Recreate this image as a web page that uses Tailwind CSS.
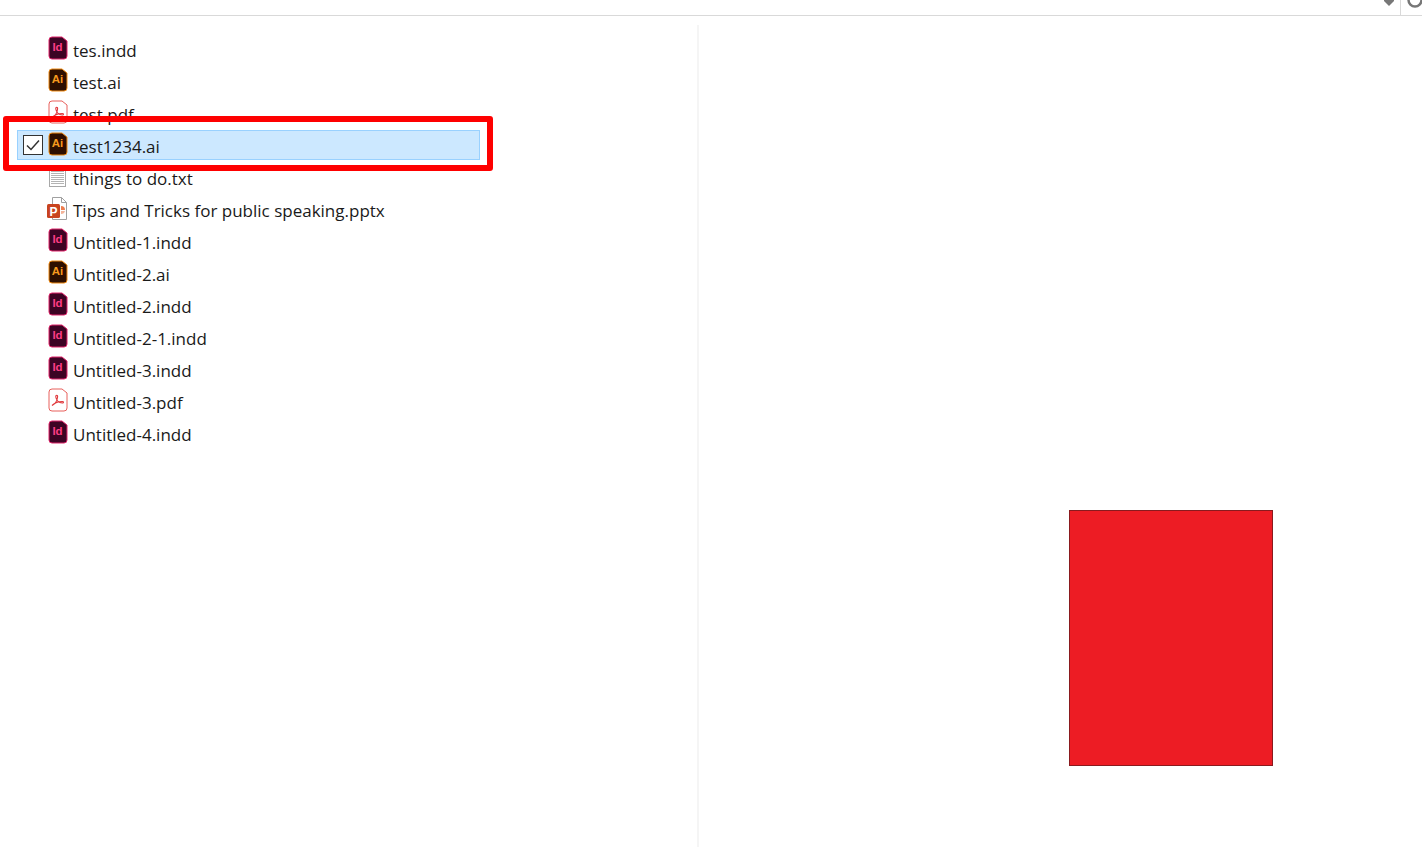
<!DOCTYPE html>
<html lang="en">
<head>
    <meta charset="UTF-8">
    <meta name="viewport" content="width=device-width, initial-scale=1.0">
    <title>Folder</title>
    <script src="https://cdn.jsdelivr.net/npm/@tailwindcss/browser@4"></script>
</head>
<body class="bg-white h-[847px] overflow-hidden relative font-['Open_Sans','Noto_Sans',sans-serif] text-[#1a1a1a]">
    <!-- shared file icons -->
    <svg class="hidden">
        <symbol id="icon-id" viewBox="0 0 20 24">
            <path d="M4 1h10l5 4v15a3 3 0 0 1-3 3H4a3 3 0 0 1-3-3V4a3 3 0 0 1 3-3z" fill="#3d0424" stroke="#e0246a" stroke-width="1"/>
            <text x="9.500" y="15" text-anchor="middle" font-family="Liberation Sans" font-weight="700" font-size="11.500" fill="#ff3d86">Id</text>
        </symbol>
        <symbol id="icon-ai" viewBox="0 0 20 24">
            <path d="M4 1h10l5 4v15a3 3 0 0 1-3 3H4a3 3 0 0 1-3-3V4a3 3 0 0 1 3-3z" fill="#2e0f00" stroke="#f08a12" stroke-width="1"/>
            <text x="9.500" y="15" text-anchor="middle" font-family="Liberation Sans" font-weight="700" font-size="11.500" fill="#f79a1e">Ai</text>
        </symbol>
        <symbol id="icon-pdf" viewBox="0 0 20 24">
            <path d="M4 1h10l5 4v15a3 3 0 0 1-3 3H4a3 3 0 0 1-3-3V4a3 3 0 0 1 3-3z" fill="#fff" stroke="#e8605c" stroke-width="1"/>
            <path d="M4 17.500c3-1.500 5.200-5 5.600-8.500.2-2.400-2-2.400-1.800 0 .3 3 3 5.600 6.500 6 1.600.1 1.600-1.500 0-1.500-3.200 0-7.200 1-10.300 4z" fill="none" stroke="#e0383c" stroke-width="1.100"/>
        </symbol>
    </svg>

    <!-- top bar -->
    <div class="h-4 border-b border-[#d9d9d9] flex justify-end overflow-hidden">
        <svg class="w-3 h-2 mr-[5px]" viewBox="0 0 12 8"><path d="M1 0h10v1L6 6 1 1z" fill="#777"/></svg>
        <div class="w-[22px] h-[15px] border-l border-[#d9d9d9] overflow-hidden">
            <svg class="ml-[6px] w-6 h-[15px]" viewBox="0 0 24 15"><circle cx="8" cy="0" r="6.500" fill="none" stroke="#777" stroke-width="2.500"/></svg>
        </div>
    </div>

    <div class="flex h-[831px]">
        <!-- file list -->
        <div class="w-[697px] pt-[18px] pl-[17px] text-[17px] leading-8">
            <div class="w-[463px]">
                <div class="flex items-center h-8 pl-[31px]"><svg class="w-5 h-6 mr-[5px] -mt-1"><use href="#icon-id"/></svg><span class="pt-[2px]">tes.indd</span></div>
                <div class="flex items-center h-8 pl-[31px]"><svg class="w-5 h-6 mr-[5px] -mt-1"><use href="#icon-ai"/></svg><span class="pt-[2px]">test.ai</span></div>
                <div class="flex items-center h-8 pl-[31px]"><svg class="w-5 h-6 mr-[5px] -mt-1"><use href="#icon-pdf"/></svg><span class="pt-[2px]">test.pdf</span></div>
                <div class="flex items-center h-[30px] mb-[2px] pl-[5px] bg-[#cce8ff] border border-[#99d1ff]">
                    <div class="w-5 h-5 mr-[5px] bg-white border border-[#333] flex items-center justify-center">
                        <svg class="w-4 h-4" viewBox="0 0 16 16"><path d="M2 8.500l4 4 8-9" fill="none" stroke="#333" stroke-width="1.500"/></svg>
                    </div>
                    <svg class="w-5 h-6 mr-[5px] -mt-[3px]"><use href="#icon-ai"/></svg><span class="pt-[4px]">test1234.ai</span>
                </div>
                <div class="flex items-center h-8 pl-[31px]">
                    <svg class="w-5 h-6 mr-[5px] -mt-1" viewBox="0 0 20 24">
                        <rect x="1.500" y="1.500" width="16" height="21" fill="#fff" stroke="#a8a8a8"/>
                        <path d="M3 5.500h13M3 7.500h13M3 9.500h13M3 11.500h13M3 13.500h13M3 15.500h13M3 17.500h13M3 19.500h13" stroke="#b4b4b4"/>
                    </svg><span class="pt-[2px]">things to do.txt</span>
                </div>
                <div class="flex items-center h-8 pl-[31px]">
                    <svg class="w-5 h-6 mr-[5px] -mt-1 overflow-visible" viewBox="0 0 20 24">
                        <path d="M4.500 1.500h9l5 5v17h-14z" fill="#fff" stroke="#a0a0a0"/>
                        <path d="M13.500 1.500v5h5" fill="none" stroke="#a0a0a0"/>
                        <rect x="-1" y="8" width="13" height="14" rx="1.500" fill="#c8431f"/>
                        <text x="5.500" y="19.500" text-anchor="middle" font-family="Liberation Sans" font-weight="700" font-size="12" fill="#fff">P</text>
                        <path d="M13 10a4 4 0 0 1 4 4h-4z" fill="#ed7d4e"/>
                        <path d="M13 15h4a4 4 0 0 1-4 3z" fill="#f4b49a"/>
                    </svg><span class="pt-[2px]">Tips and Tricks for public speaking.pptx</span>
                </div>
                <div class="flex items-center h-8 pl-[31px]"><svg class="w-5 h-6 mr-[5px] -mt-1"><use href="#icon-id"/></svg><span class="pt-[2px]">Untitled-1.indd</span></div>
                <div class="flex items-center h-8 pl-[31px]"><svg class="w-5 h-6 mr-[5px] -mt-1"><use href="#icon-ai"/></svg><span class="pt-[2px]">Untitled-2.ai</span></div>
                <div class="flex items-center h-8 pl-[31px]"><svg class="w-5 h-6 mr-[5px] -mt-1"><use href="#icon-id"/></svg><span class="pt-[2px]">Untitled-2.indd</span></div>
                <div class="flex items-center h-8 pl-[31px]"><svg class="w-5 h-6 mr-[5px] -mt-1"><use href="#icon-id"/></svg><span class="pt-[2px]">Untitled-2-1.indd</span></div>
                <div class="flex items-center h-8 pl-[31px]"><svg class="w-5 h-6 mr-[5px] -mt-1"><use href="#icon-id"/></svg><span class="pt-[2px]">Untitled-3.indd</span></div>
                <div class="flex items-center h-8 pl-[31px]"><svg class="w-5 h-6 mr-[5px] -mt-1"><use href="#icon-pdf"/></svg><span class="pt-[2px]">Untitled-3.pdf</span></div>
                <div class="flex items-center h-8 pl-[31px]"><svg class="w-5 h-6 mr-[5px] -mt-1"><use href="#icon-id"/></svg><span class="pt-[2px]">Untitled-4.indd</span></div>
            </div>
        </div>

        <!-- preview pane -->
        <div class="flex-1 mt-[9px] border-l-2 border-[#f5f5f5] pl-[370px] pt-[485px]">
            <div class="w-[204px] h-[256px] bg-[#ed1c24] border border-[#8a1a1e]"></div>
        </div>
    </div>

    <!-- annotation drawn over the screenshot -->
    <div class="absolute left-[3px] top-[116px] w-[490px] h-[55px] border-[6px] border-[#fe0000] rounded-[3px]"></div>
</body>
</html>
